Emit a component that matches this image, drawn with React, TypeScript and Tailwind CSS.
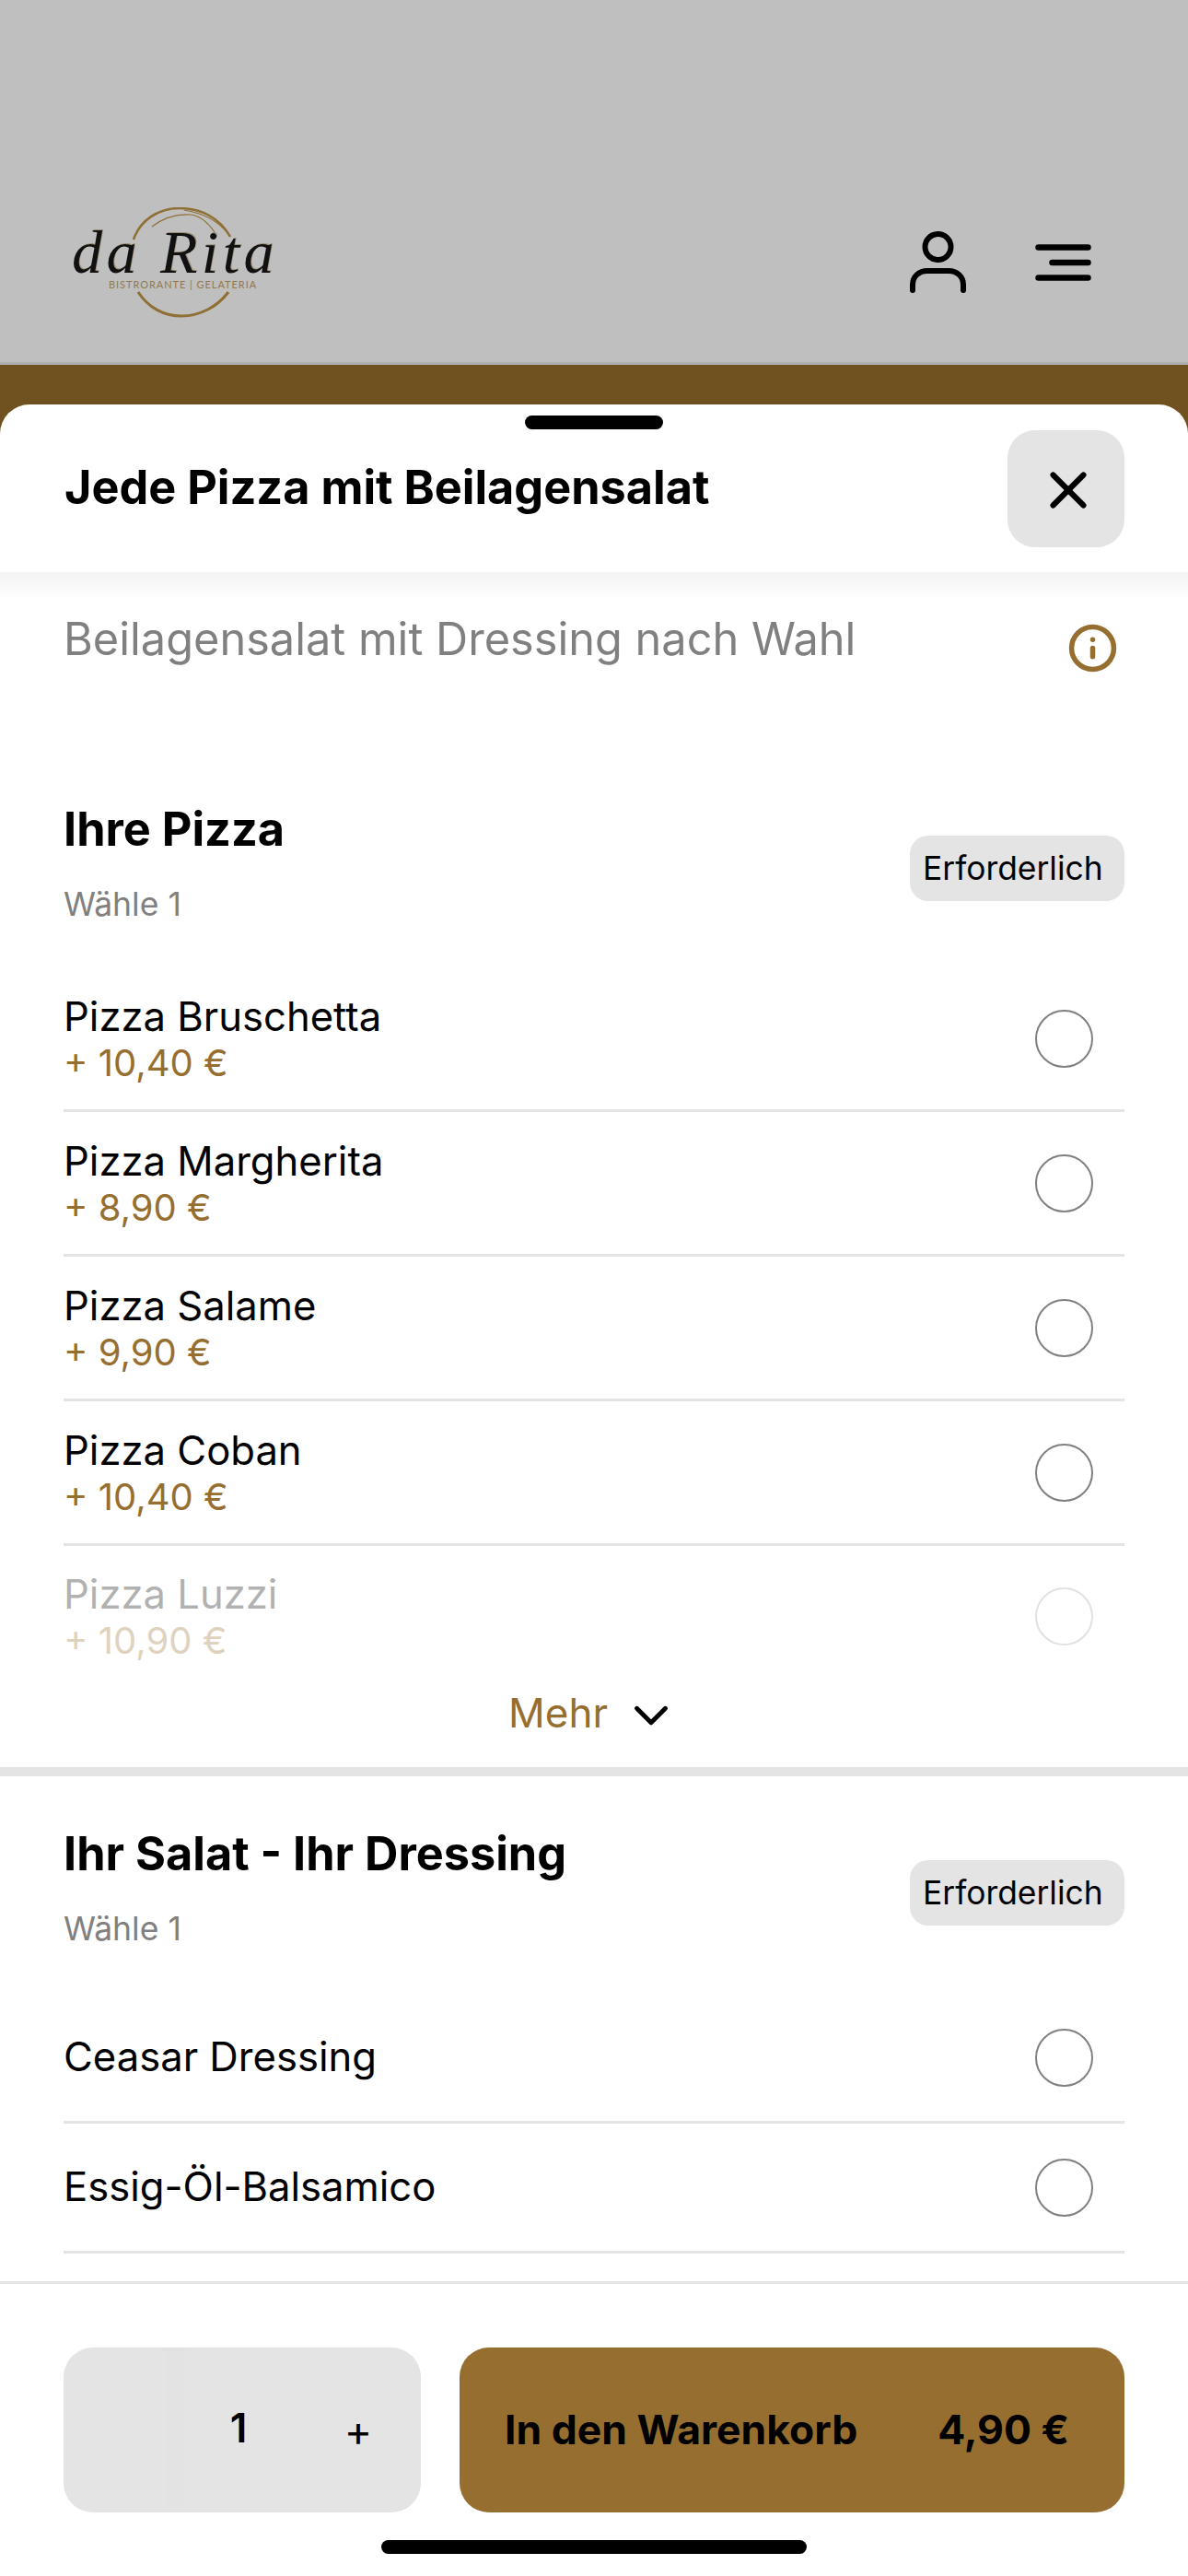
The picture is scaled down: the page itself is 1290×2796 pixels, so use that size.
import { ChevronDown, Info, X } from "lucide-react"

const font = "font-['Inter',sans-serif]"

function Logo() {
  return (
    <div className="relative w-[230px] h-[125px]">
      <svg width="230" height="125" viewBox="0 0 230 125" fill="none" className="absolute inset-0">
        <path d="M69 35 C76 14 96 1 119 1 C143 1 163 12 174 32" stroke="#8f6f33" strokeWidth="2.5" />
        <path d="M89 21 C102 11 116 7 131 8 C142 9 150 17 157 27" stroke="#8f6f33" strokeWidth="1.2" />
        <path d="M124 3 C143 6 160 14 171 28" stroke="#8f6f33" strokeWidth="1.2" />
        <path d="M74 92 C85 109 102 118 121 118 C141 118 160 108 172 92" stroke="#8f6f33" strokeWidth="3" />
      </svg>
      <div className="absolute left-[2px] top-[22px] font-['Liberation_Serif',serif] italic text-[66px] leading-[54px] tracking-[4.5px] text-[#111] whitespace-nowrap [text-shadow:1px_-1px_0_#9c8f78]">da Rita</div>
      <div className="absolute left-[42px] top-[77px] font-['Lato',sans-serif] text-[11px] leading-[14px] tracking-[0.95px] text-[#94784a] whitespace-nowrap">BISTRORANTE | GELATERIA</div>
    </div>
  )
}

function OptionRow({ name, price, faded }: { name: string; price?: string; faded?: boolean }) {
  return (
    <div className={`flex items-center justify-between ${price ? "h-[157px]" : "h-[141px]"} ${faded ? "pb-[5px]" : "border-b-[3px] border-[#e4e4e4]"}`}>
      <div className={faded ? "opacity-30" : ""}>
        <div className="text-[43.6px] leading-[54px] text-black">{name}</div>
        {price && <div className="text-[40px] leading-[46px] text-[#966f30]">{price}</div>}
      </div>
      <div className={`w-[63px] h-[63px] rounded-full border-2 mr-[34px] ${faded ? "border-[#e2e2e2]" : "border-[#808080]"}`} />
    </div>
  )
}

function SectionHead({ title }: { title: string }) {
  return (
    <div className="flex items-start justify-between">
      <div>
        <div className="text-[50.4px] leading-[64px] font-bold text-black">{title}</div>
        <div className="mt-[29px] text-[35.5px] leading-[42px] text-[#808080]">Wähle 1</div>
      </div>
      <div className="mt-[39px] h-[71px] w-[233px] rounded-[20px] bg-[#e4e4e4] flex items-center pl-[14px] text-[35.4px] text-black">Erforderlich</div>
    </div>
  )
}

export default function App() {
  return (
    <div className={`${font} w-[1290px] h-[2796px] overflow-hidden relative bg-white`}>
      <header className="h-[396px] bg-[#bfbfbf] border-b-[3px] border-[#b0b0b0] flex items-end justify-between pl-[76px] pr-[105px] pb-[43px]">
        <Logo />
        <div className="flex items-center gap-[75px] mb-[32px]">
          <svg width="61" height="67" viewBox="0 0 61 67" fill="none" stroke="#000" strokeWidth="6" strokeLinecap="round">
            <circle cx="30.5" cy="17" r="14" />
            <path d="M3 64 V58 C3 49 10 43 19 43 H42 C51 43 58 49 58 58 V64" />
          </svg>
          <svg width="61" height="40" viewBox="0 0 61 40" fill="none" stroke="#000" strokeWidth="6.5" strokeLinecap="round">
            <path d="M3.5 3.5 H57.5 M18.5 20 H57.5 M3.5 36.5 H57.5" />
          </svg>
        </div>
      </header>
      <div className="h-[90px] bg-[#6f5220]" />
      <section className="absolute left-0 right-0 top-[439px] bottom-0 bg-white rounded-t-[32px] overflow-hidden">
        <div className="relative h-[182px] flex items-start justify-between pl-[70px] pr-[69px] pt-[26px]">
          <div className="absolute left-[570px] top-[12px] w-[150px] h-[15px] rounded-full bg-black" />
          <div className="text-[50.4px] leading-[127px] font-bold text-black">Jede Pizza mit Beilagensalat</div>
          <div className="w-[127px] h-[127px] mt-[2px] rounded-[30px] bg-[#e4e4e4] flex items-center justify-center pl-[4px] pt-[2px]">
            <X size={66} strokeWidth={2.2} color="#000" />
          </div>
        </div>
        <div className="h-[30px] bg-gradient-to-b from-[#f3f3f3] to-white" />
        <div className="px-[69px]">
          <div className="flex items-start justify-between mt-[13px]">
            <div className="text-[48.7px] leading-[60px] text-[#808080]">Beilagensalat mit Dressing nach Wahl</div>
            <Info size={55} strokeWidth={2.4} color="#966f30" className="mt-[12px] mr-[7px]" />
          </div>
          <div className="mt-[137px]">
            <SectionHead title="Ihre Pizza" />
          </div>
          <div className="mt-[47px]">
            <OptionRow name="Pizza Bruschetta" price="+ 10,40 €" />
            <OptionRow name="Pizza Margherita" price="+ 8,90 €" />
            <OptionRow name="Pizza Salame" price="+ 9,90 €" />
            <OptionRow name="Pizza Coban" price="+ 10,40 €" />
            <div className="h-[122px]">
              <OptionRow name="Pizza Luzzi" price="+ 10,90 €" faded />
            </div>
          </div>
        </div>
        <div className="relative h-[118px] flex items-center justify-center gap-[16px] text-[44px] text-[#966f30]">
          <span>Mehr</span>
          <ChevronDown size={62} strokeWidth={1.9} color="#000" className="mt-[6px]" />
        </div>
        <div className="h-[10px] bg-[#e4e4e4]" />
        <div className="px-[69px] pt-[52px]">
          <SectionHead title="Ihr Salat - Ihr Dressing" />
          <div className="mt-[49px]">
            <OptionRow name="Ceasar Dressing" />
            <OptionRow name="Essig-Öl-Balsamico" />
          </div>
        </div>
      </section>
      <footer className="absolute left-0 right-0 bottom-0 h-[320px] bg-white border-t-[3px] border-[#e4e4e4] px-[69px] pt-[69px]">
        <div className="flex gap-[42px] h-[179px]">
          <div className="w-[388px] rounded-[32px] bg-[#e4e4e4] flex items-center overflow-hidden text-black">
            <div className="w-[112px]" />
            <div className="w-[20px] self-stretch bg-[#e3e3e3]" />
            <span className="w-[116px] text-center text-[44px] font-semibold -mt-[6px]">1</span>
            <span className="flex-1 text-center pl-[4px] text-[46px] leading-[46px]">+</span>
          </div>
          <div className="flex-1 rounded-[32px] bg-[#966f30] flex items-center justify-between pl-[49px] pr-[60px] text-[44.5px] font-bold text-black">
            <span>In den Warenkorb</span>
            <span>4,90 €</span>
          </div>
        </div>
        <div className="mt-[30px] mx-auto w-[462px] h-[15px] rounded-full bg-black" />
      </footer>
    </div>
  )
}
